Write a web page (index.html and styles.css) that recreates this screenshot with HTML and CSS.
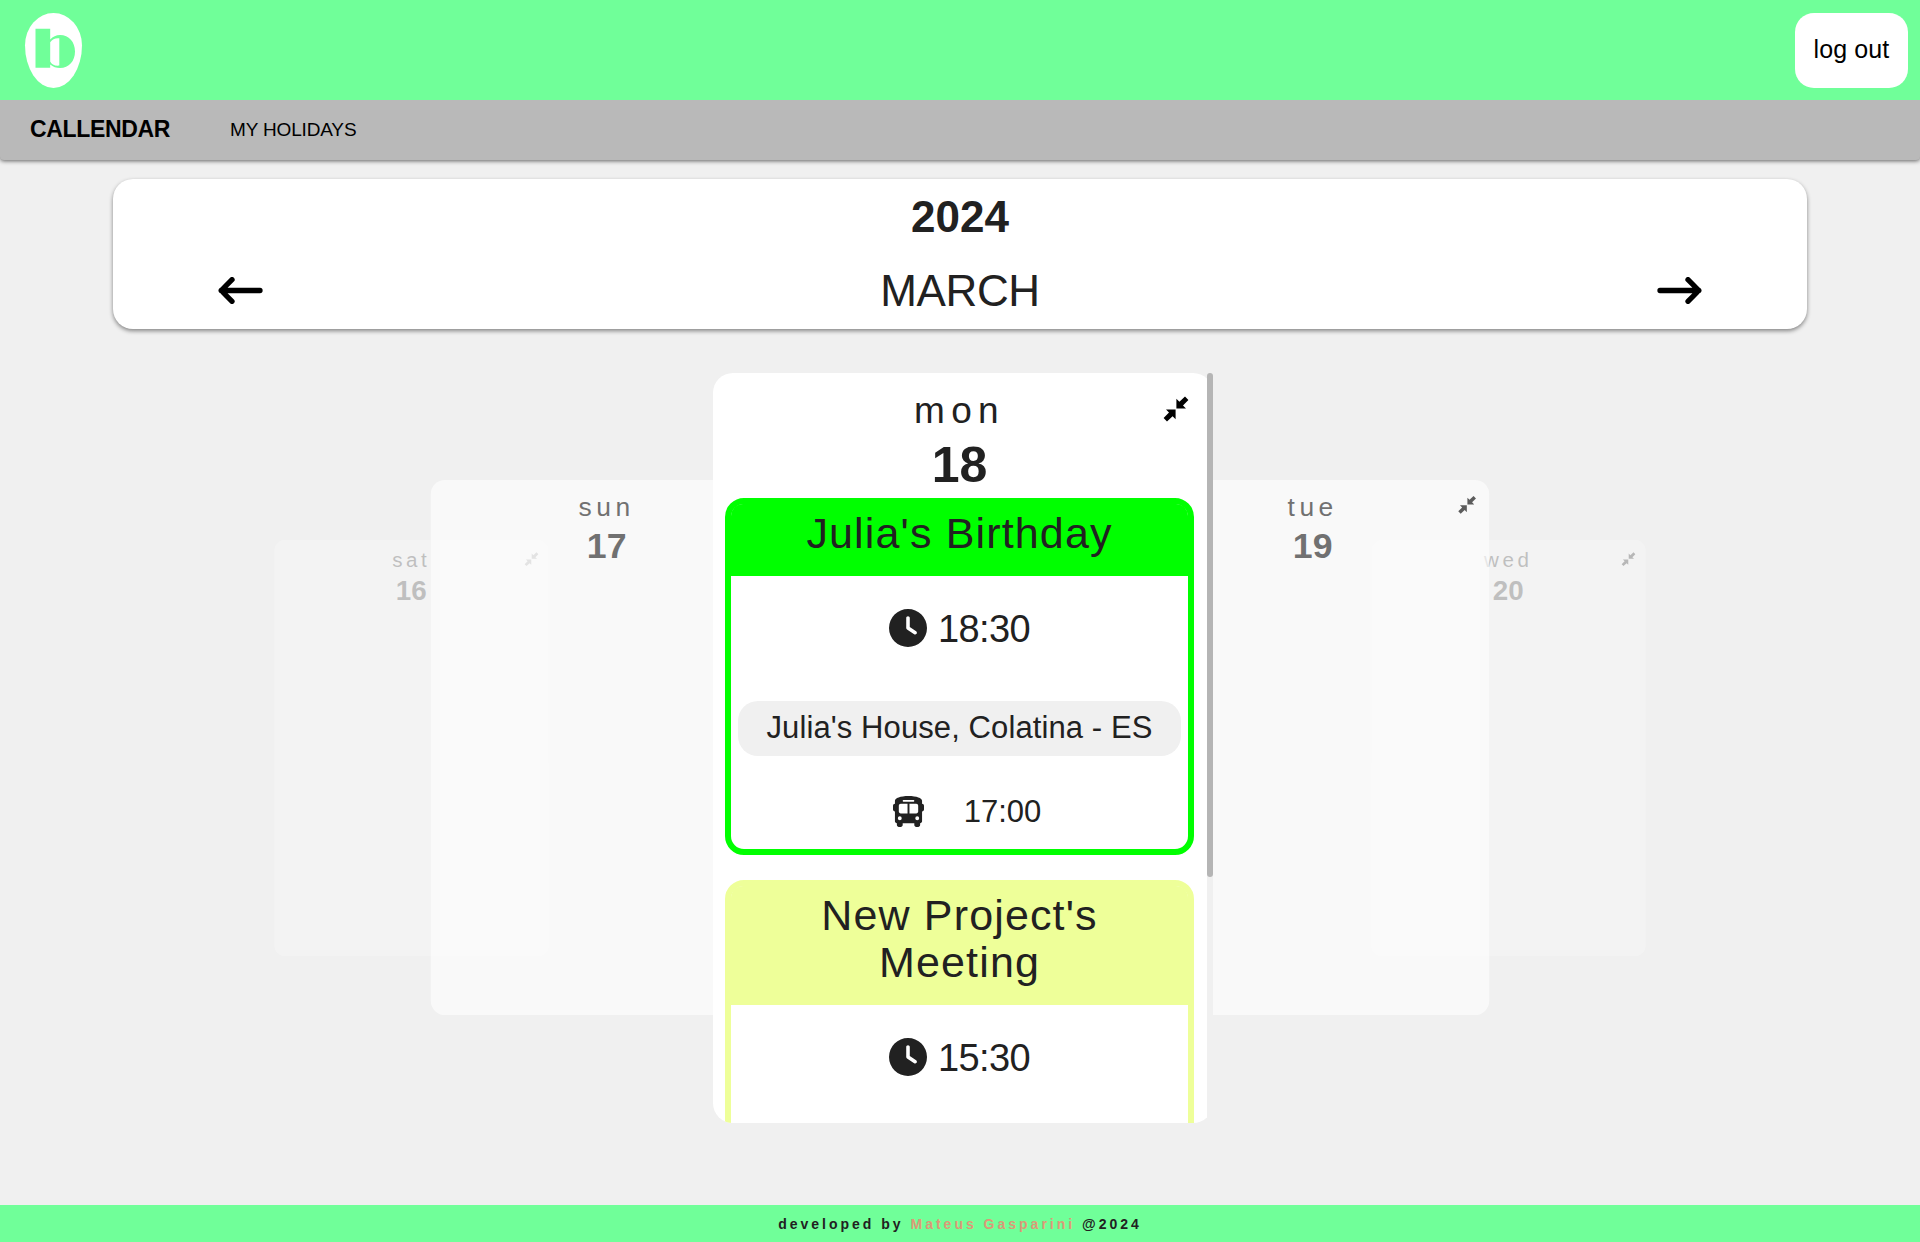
FILE: index.html
```html
<!DOCTYPE html>
<html lang="en">
<head>
<meta charset="utf-8">
<title>Callendar</title>
<link rel="stylesheet" href="styles.css">
</head>
<body>
<svg class="sprite" aria-hidden="true">
  <symbol id="compress" viewBox="0 0 26 26"><path d="M22 .6 25.400 4 20 9.400 23 12.400H13.400V2.800L16.400 5.800ZM4 25.400.6 22 6 16.600 3 13.600H12.600V23.200L9.600 20.200Z"/></symbol>
  <symbol id="clock" viewBox="0 0 512 512"><path d="M256 0a256 256 0 1 1 0 512A256 256 0 1 1 256 0ZM232 120V256c0 8 4 15.500 10.700 20l96 64c11 7.400 25.900 4.400 33.300-6.700s4.400-25.900-6.700-33.300L280 243.200V120c0-13.300-10.700-24-24-24s-24 10.700-24 24z"/></symbol>
  <symbol id="bus" viewBox="0 0 512 512"><path fill-rule="evenodd" d="M256 0C390.400 0 480 35.200 480 80v16 32c17.700 0 32 14.300 32 32v64c0 17.700-14.300 32-32 32v160c0 17.700-14.300 32-32 32v32c0 17.700-14.300 32-32 32h-32c-17.700 0-32-14.300-32-32v-32H160v32c0 17.700-14.300 32-32 32H96c-17.700 0-32-14.300-32-32v-32c-17.700 0-32-14.300-32-32V256c-17.700 0-32-14.300-32-32v-64c0-17.700 14.300-32 32-32V96 80C32 35.200 121.600 0 256 0ZM96 160v96c0 17.700 14.300 32 32 32h112V128H128c-17.700 0-32 14.300-32 32Zm176 128h112c17.700 0 32-14.300 32-32v-96c0-17.700-14.300-32-32-32H272ZM112 400a32 32 0 1 0 0-64 32 32 0 1 0 0 64Zm288 0a32 32 0 1 0 0-64 32 32 0 1 0 0 64ZM352 80c0-8.800-7.200-16-16-16H176c-8.800 0-16 7.200-16 16s7.200 16 16 16h160c8.800 0 16-7.200 16-16Z"/></symbol>
  <symbol id="arrow" viewBox="0 0 45 28"><path d="M3.200 13.500H42M3.200 13.500 14 2.700M3.200 13.500 14 24.300" fill="none" stroke="#000" stroke-width="5.300" stroke-linecap="round" stroke-linejoin="round"/></symbol>
</svg>

<header class="top">
  <div class="logo">
    <svg viewBox="0 0 57 75" width="57" height="75"><path fill="#70ff99" d="M10.500 15.700H25.200V26.400C28 23.600 31 22 35 22 44 22 50 29 50 38.500S44 55 35 55C31.500 55 28 54 25.200 51.500V54.800H10.500ZM25.200 29.200V48.500C26.500 51.500 29.500 53 34.300 52.600V25.200C30 24.800 27.500 26.200 25.200 29.200Z" fill-rule="evenodd"/></svg>
  </div>
  <button class="logout">log out</button>
</header>
<nav class="tabs">
  <a class="tab active">CALLENDAR</a>
  <a class="tab">MY HOLIDAYS</a>
</nav>

<section class="period">
  <div class="year">2024</div>
  <div class="month-row">
    <svg class="arrow"><use href="#arrow"/></svg>
    <div class="month">MARCH</div>
    <svg class="arrow next"><use href="#arrow"/></svg>
  </div>
</section>

<main class="stage">
  <article class="day far left"><div class="content"><div class="weekday">sat</div><div class="date">16</div></div><svg class="compress"><use href="#compress"/></svg></article>
  <article class="day far right"><div class="content"><div class="weekday">wed</div><div class="date">20</div></div><svg class="compress"><use href="#compress"/></svg></article>
  <article class="day near left"><div class="content"><div class="weekday">sun</div><div class="date">17</div></div><svg class="compress"><use href="#compress"/></svg></article>
  <article class="day near right"><div class="content"><div class="weekday">tue</div><div class="date">19</div></div><svg class="compress"><use href="#compress"/></svg></article>
  <article class="day current">
    <div class="content">
      <div class="weekday">mon</div>
      <div class="date">18</div>
      <section class="event birthday">
        <h2 class="title">Julia's Birthday</h2>
        <div class="details">
          <div class="time"><svg class="clock"><use href="#clock"/></svg><span>18:30</span></div>
          <div class="place">Julia's House, Colatina - ES</div>
          <div class="travel"><svg class="bus"><use href="#bus"/></svg><span>17:00</span></div>
        </div>
      </section>
      <section class="event meeting">
        <h2 class="title">New Project's Meeting</h2>
        <div class="details">
          <div class="time"><svg class="clock"><use href="#clock"/></svg><span>15:30</span></div>
        </div>
      </section>
    </div>
    <div class="track"><div class="thumb"></div></div>
    <svg class="compress"><use href="#compress"/></svg>
  </article>
</main>

<footer class="foot"><span>developed by <a class="author">Mateus Gasparini</a> @2024</span></footer>
</body>
</html>
```
FILE: styles.css
```css
* { box-sizing: border-box; margin: 0; padding: 0; }
body {
  height: 1242px;
  display: flex;
  flex-direction: column;
  overflow: hidden;
  background: #f0f0f0;
  color: #212121;
  font-family: "Liberation Sans", Arial, sans-serif;
}
.sprite { display: none; }
.top {
  position: relative;
  z-index: 1;
  height: 100px;
  flex: none;
  display: flex;
  align-items: center;
  justify-content: space-between;
  padding: 0 12px 0 25px;
  background: #70ff99;
}
.logo {
  width: 57px;
  height: 75px;
  background: #fff;
  border-radius: 50% / 43% 43% 57% 57%;
}
.logo svg { display: block; }
.logout {
  width: 113px;
  height: 75px;
  padding-bottom: 1px;
  border: 0;
  border-radius: 19px;
  background: #fff;
  color: #000;
  font: 25px "Liberation Sans", Arial, sans-serif;
  letter-spacing: .1px;
}
.tabs {
  height: 60px;
  flex: none;
  display: flex;
  align-items: center;
  gap: 60px;
  padding-left: 30px;
  background: #b9b9b9;
  border-radius: 0 0 4px 4px;
  box-shadow: 0 1px 4px rgba(0, 0, 0, .6);
  color: #000;
}
.tab { font-size: 19px; letter-spacing: -.15px; }
.tab.active {
  padding-bottom: 2px;
  font-size: 23px;
  font-weight: 700;
  letter-spacing: -.35px;
}
.period {
  width: 1694px;
  height: 150px;
  flex: none;
  margin: 19px auto 0;
  background: #fff;
  border-radius: 20px;
  box-shadow: 0 2px 4px rgba(0, 0, 0, .45);
}
.year {
  padding-top: 13px;
  height: 74px;
  text-align: center;
  font-size: 44px;
  font-weight: 700;
}
.month-row {
  display: flex;
  align-items: center;
  justify-content: space-between;
  height: 76px;
  padding: 0 105px;
}
.month { font-size: 44px; letter-spacing: -.4px; }
.arrow { width: 45px; height: 28px; }
.next { transform: scaleX(-1); }
.stage { position: relative; flex: 1; }
.day {
  position: absolute;
  left: 713px;
  top: 44px;
  width: 494px;
  height: 750px;
  display: flex;
  background: #fff;
  border-radius: 20px;
}
.current { width: 500px; }
.near { opacity: .61; }
.far { opacity: .23; }
.near.left { transform: translate(-353px, -.5px) scale(.7135); }
.near.right { transform: translate(353px, -.5px) scale(.7135); }
.far.left { transform: translate(-548.5px, 0) scale(.5555); }
.far.right { transform: translate(548.5px, 0) scale(.5555); }
.content {
  flex: 1;
  min-width: 0;
  overflow: hidden;
  padding: 17px 13px 0 12px;
  border-radius: 20px 0 0 20px;
}
.weekday {
  height: 44px;
  line-height: 42px;
  text-align: center;
  font-size: 37px;
  letter-spacing: 6.300px;
}
.date {
  height: 64px;
  line-height: 62px;
  text-align: center;
  font-size: 50px;
  font-weight: 700;
}
.compress {
  position: absolute;
  top: 22px;
  right: 18px;
  width: 26px;
  height: 26px;
}
.current .compress { top: 23px; right: 24px; }
.track { width: 6px; background: #f0f0f0; }
.thumb { height: 504px; border-radius: 3px; background: #b5b5b5; }
.event {
  border: 6px solid;
  border-radius: 19px;
  margin-bottom: 25px;
}
.birthday { border-color: #00ff00; --tone: #00ff00; height: 357px; }
.meeting { border-color: #eeff99; --tone: #eeff99; height: 400px; }
.title {
  padding: 6px 30px 19px;
  background: var(--tone);
  border-radius: 12px 12px 0 0;
  text-align: center;
  font-size: 43px;
  line-height: 47px;
  font-weight: 400;
  letter-spacing: 1.150px;
}
.details {
  display: flex;
  flex-direction: column;
  padding: 0 7px;
}
.time {
  display: flex;
  align-items: center;
  justify-content: center;
  gap: 11px;
  height: 104px;
  font-size: 38px;
  letter-spacing: -.6px;
}
.time span { padding-top: 2px; }
.clock { width: 38px; height: 38px; fill: #212121; }
.place {
  height: 55px;
  margin: 21px 0 28px;
  line-height: 53px;
  text-align: center;
  font-size: 31px;
  letter-spacing: .1px;
  border-radius: 20px;
  background: #f0f0f0;
}
.travel {
  display: flex;
  align-items: center;
  justify-content: center;
  gap: 40px;
  height: 55px;
  padding-left: 15px;
  font-size: 31px;
}
.bus { width: 31px; height: 31px; fill: #212121; }
.foot {
  height: 37px;
  flex: none;
  display: flex;
  align-items: center;
  justify-content: center;
  background: #70ff99;
  font-size: 14px;
  font-weight: 700;
  letter-spacing: 3px;
}
.author { color: #dd9977; }
```
